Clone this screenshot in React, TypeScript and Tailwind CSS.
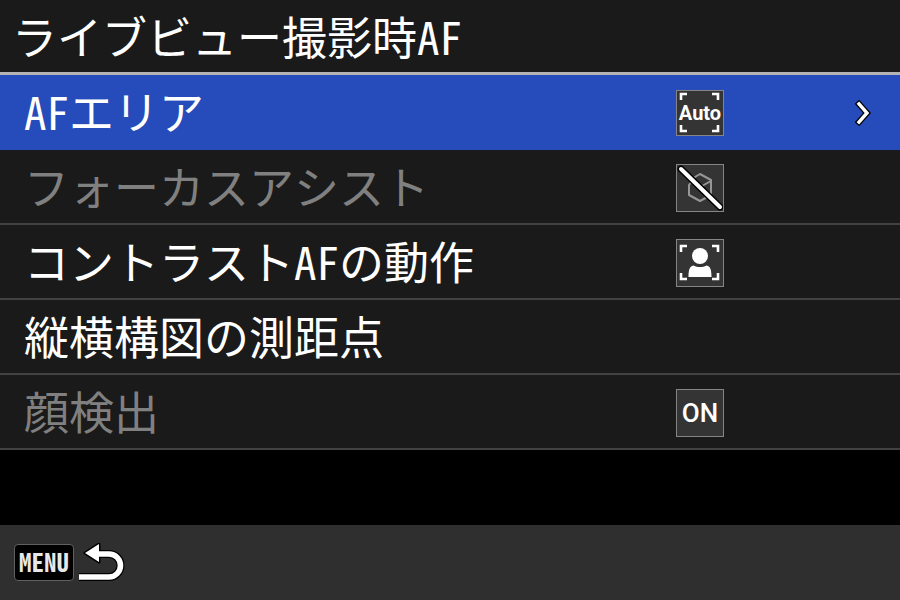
import type { ReactNode } from 'react';

type MenuItem = {
  label: string;
  icon?: ReactNode;
  selected?: boolean;
  disabled?: boolean;
};

function FocusCorners({ top, bottom }: { top: number; bottom: number }) {
  return (
    <path
      d={`M5 ${top + 6}V${top}h6M36 ${top}h6v6M42 ${bottom - 6}v6h-6M11 ${bottom}H5v-6`}
      fill="none"
      stroke="#fff"
      strokeWidth="2.6"
    />
  );
}

function AutoAreaIcon() {
  return (
    <>
      <svg viewBox="1 1 46 44" className="absolute inset-0 h-full w-full" aria-hidden="true">
        <FocusCorners top={4} bottom={41} />
      </svg>
      <span className="relative font-['Roboto',sans-serif] text-[20px] leading-none font-bold">Auto</span>
    </>
  );
}

function FocusAssistOffIcon() {
  return (
    <svg viewBox="1 1 46 46" className="h-full w-full" aria-hidden="true">
      <g fill="none" stroke="#969696" strokeWidth="2" strokeLinejoin="round" strokeLinecap="round">
        <path d="M13 21l6-8 5-3 11 6v15l-11 6-11-6z" />
        <path d="M35 17l-9 5" />
      </g>
      <path d="M5 5l39 38" stroke="#000" strokeWidth="7" strokeLinecap="round" />
      <path d="M5 5l39 38" stroke="#fff" strokeWidth="4" strokeLinecap="round" />
    </svg>
  );
}

function FacePriorityIcon() {
  return (
    <svg viewBox="1 1 46 46" className="h-full w-full" aria-hidden="true">
      <FocusCorners top={7} bottom={40} />
      <circle cx="24" cy="17" r="8" fill="#fff" />
      <path d="M12.500 38c0-5 .5-11 5-11.500 4 2 9 2 13 0 4.500.5 5 6.500 5 11.500z" fill="#fff" />
    </svg>
  );
}

const items: MenuItem[] = [
  { label: 'AFエリア', icon: <AutoAreaIcon />, selected: true },
  { label: 'フォーカスアシスト', icon: <FocusAssistOffIcon />, disabled: true },
  { label: 'コントラストAFの動作', icon: <FacePriorityIcon /> },
  { label: '縦横構図の測距点' },
  {
    label: '顔検出',
    icon: <span className="font-['Roboto',sans-serif] text-[26px] leading-none font-medium">ON</span>,
    disabled: true,
  },
];

function MenuRow({ label, icon, selected, disabled }: MenuItem) {
  return (
    <li>
      <button
        type="button"
        disabled={disabled}
        className={`grid h-[75px] w-full grid-cols-[3fr_1fr] items-center text-left ${
          selected ? 'bg-[#264bba]' : 'border-b-2 border-[#424242] bg-[#1a1a1a] pt-0.5'
        }`}
      >
        <span
          className={`pb-1 pl-6 text-[45px] leading-[60px] font-light whitespace-nowrap ${
            disabled ? 'text-[#808080]' : 'text-white'
          }`}
        >
          {label}
        </span>
        <span className="flex items-center justify-between pr-7 pl-px">
          {icon && (
            <span
              className={`relative flex w-12 items-center justify-center border border-[#858585] bg-[#343434] text-white ${
                selected ? 'h-[46px]' : 'h-12'
              }`}
            >
              {icon}
            </span>
          )}
          {selected && (
            <svg viewBox="0 0 18 26" className="h-[26px] w-[18px]" fill="none" aria-hidden="true">
              <path d="M5 4l8 9-8 9" stroke="#000" strokeWidth="6" strokeLinecap="square" />
              <path d="M5 4l8 9-8 9" stroke="#fff" strokeWidth="3.4" strokeLinecap="square" />
            </svg>
          )}
        </span>
      </button>
    </li>
  );
}

export default function App() {
  return (
    <div className="flex min-h-screen flex-col bg-black font-['Noto_Sans_Mono_CJK_JP','Noto_Sans_CJK_JP',sans-serif] text-white">
      <header className="flex h-[75px] items-center border-b-3 border-[#b4b4b4] bg-[#1a1a1a] pl-3">
        <h1 className="text-[45px] leading-[60px] font-light whitespace-nowrap">ライブビュー撮影時AF</h1>
      </header>

      <ul>
        {items.map((item) => (
          <MenuRow key={item.label} {...item} />
        ))}
      </ul>

      <footer className="mt-auto flex h-[75px] items-center bg-[#2f2f2f] pl-[14px]">
        <button type="button" className="flex items-center gap-1">
          <span className="flex h-[37px] w-15 items-center justify-center rounded-sm border border-[#606060] bg-black pb-0.5 text-[25px] leading-none font-bold text-[#e8e8e8]">
            MENU
          </span>
          <svg viewBox="0 0 48 40" className="h-10 w-12" role="img" aria-label="戻る">
            <g stroke="#000" strokeWidth="3" strokeLinejoin="round">
              <path d="M1 34h30a11 11 0 0 0 0-23H20" fill="none" strokeWidth="8" />
              <path d="M7 10L21 1v18z" fill="#000" />
            </g>
            <path d="M1 34h30a11 11 0 0 0 0-23H20" fill="none" stroke="#fff" strokeWidth="5.6" />
            <path d="M7 10L21 1v18z" fill="#fff" />
          </svg>
        </button>
      </footer>
    </div>
  );
}
